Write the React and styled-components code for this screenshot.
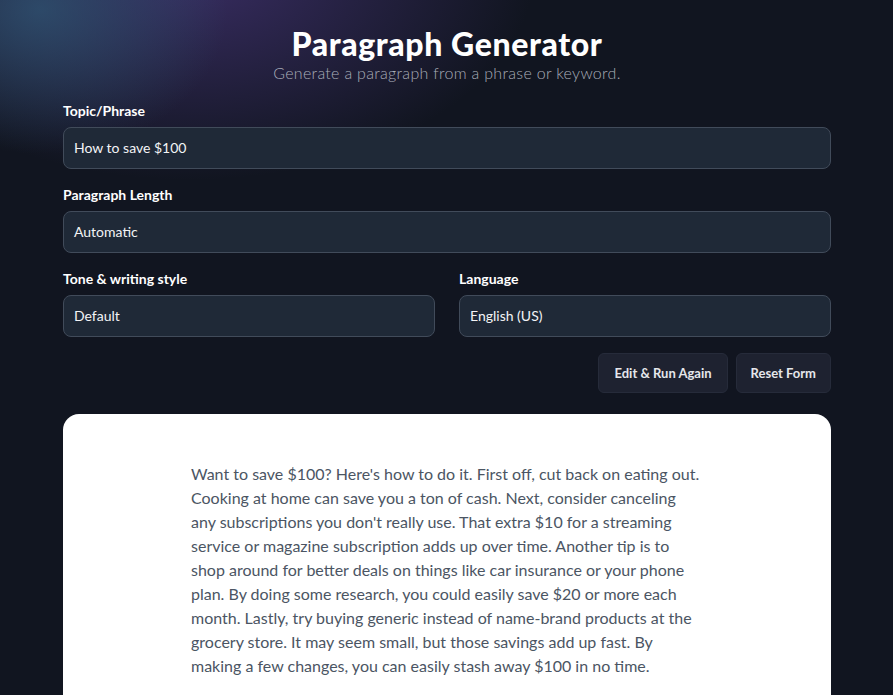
import styled, { createGlobalStyle } from 'styled-components'

const GlobalStyle = createGlobalStyle`
    html, body {
        margin: 0;
        background: #111520;
    }
    * { box-sizing: border-box; }
`

const Page = styled.div`
    min-height: 695px;
    background:
        radial-gradient(ellipse 260px 200px at 40px 10px, rgba(48, 90, 120, 0.7), transparent 72%),
        radial-gradient(ellipse 460px 280px at 190px -30px, rgba(72, 54, 124, 0.72), transparent 75%),
        #111520;
    font-family: Lato, "Liberation Sans", sans-serif;
    color: #fff;
    padding: 26px 62px 0 63px;
    overflow: hidden;
`

const Header = styled.header`
    text-align: center;
    margin-bottom: 16px;
`

const Title = styled.h1`
    margin: 0;
    font-size: 32px;
    line-height: 36px;
    font-weight: 900;
    letter-spacing: 0.6px;
`

const Subtitle = styled.p`
    margin: -1px 0 0;
    font-size: 16px;
    line-height: 24px;
    font-weight: 300;
    letter-spacing: 0.3px;
    color: #a8adb8;
`

const Form = styled.div`
    display: flex;
    flex-direction: column;
    gap: 16px;
`

const Row = styled.div`
    display: grid;
    grid-template-columns: 1fr 1fr;
    gap: 24px;
`

const Field = styled.label`
    display: flex;
    flex-direction: column;
    gap: 6px;
`

const Label = styled.span`
    font-size: 14px;
    line-height: 20px;
    font-weight: 700;
`

const Input = styled.div`
    height: 42px;
    display: flex;
    align-items: center;
    padding: 0 10px 1px;
    background: #1f2937;
    border: 1px solid #414b5a;
    border-radius: 8px;
    font-size: 14px;
    color: #f3f4f6;
`

const Actions = styled.div`
    display: flex;
    justify-content: flex-end;
    gap: 8px;
`

const Button = styled.button`
    height: 40px;
    padding: 0 ${p => p.$pad}px;
    background: #1e2230;
    border: 1px solid #262b3a;
    border-radius: 6px;
    color: #e5e7eb;
    font-family: inherit;
    font-size: 13px;
    font-weight: 700;
`

const Card = styled.div`
    margin-top: 21px;
    background: #fff;
    border-radius: 16px;
    padding: 48px 0 40px;
    display: flex;
    justify-content: center;
`

const Text = styled.p`
    margin: 0;
    width: 512px;
    font-size: 16px;
    line-height: 24px;
    color: #4b5563;
`

const App = () => {
    return (
        <Page>
            <GlobalStyle />
            <Header>
                <Title>Paragraph Generator</Title>
                <Subtitle>Generate a paragraph from a phrase or keyword.</Subtitle>
            </Header>
            <Form>
                <Field>
                    <Label>Topic/Phrase</Label>
                    <Input>How to save $100</Input>
                </Field>
                <Field>
                    <Label>Paragraph Length</Label>
                    <Input>Automatic</Input>
                </Field>
                <Row>
                    <Field>
                        <Label>Tone &amp; writing style</Label>
                        <Input>Default</Input>
                    </Field>
                    <Field>
                        <Label>Language</Label>
                        <Input>English (US)</Input>
                    </Field>
                </Row>
                <Actions>
                    <Button $pad={15}>Edit &amp; Run Again</Button>
                    <Button $pad={14}>Reset Form</Button>
                </Actions>
            </Form>
            <Card>
                <Text>
                    Want to save $100? Here's how to do it. First off, cut back on eating out.
                    Cooking at home can save you a ton of cash. Next, consider canceling
                    any subscriptions you don't really use. That extra $10 for a streaming
                    service or magazine subscription adds up over time. Another tip is to
                    shop around for better deals on things like car insurance or your phone
                    plan. By doing some research, you could easily save $20 or more each
                    month. Lastly, try buying generic instead of name-brand products at the
                    grocery store. It may seem small, but those savings add up fast. By
                    making a few changes, you can easily stash away $100 in no time.
                </Text>
            </Card>
        </Page>
    )
}

export default App
